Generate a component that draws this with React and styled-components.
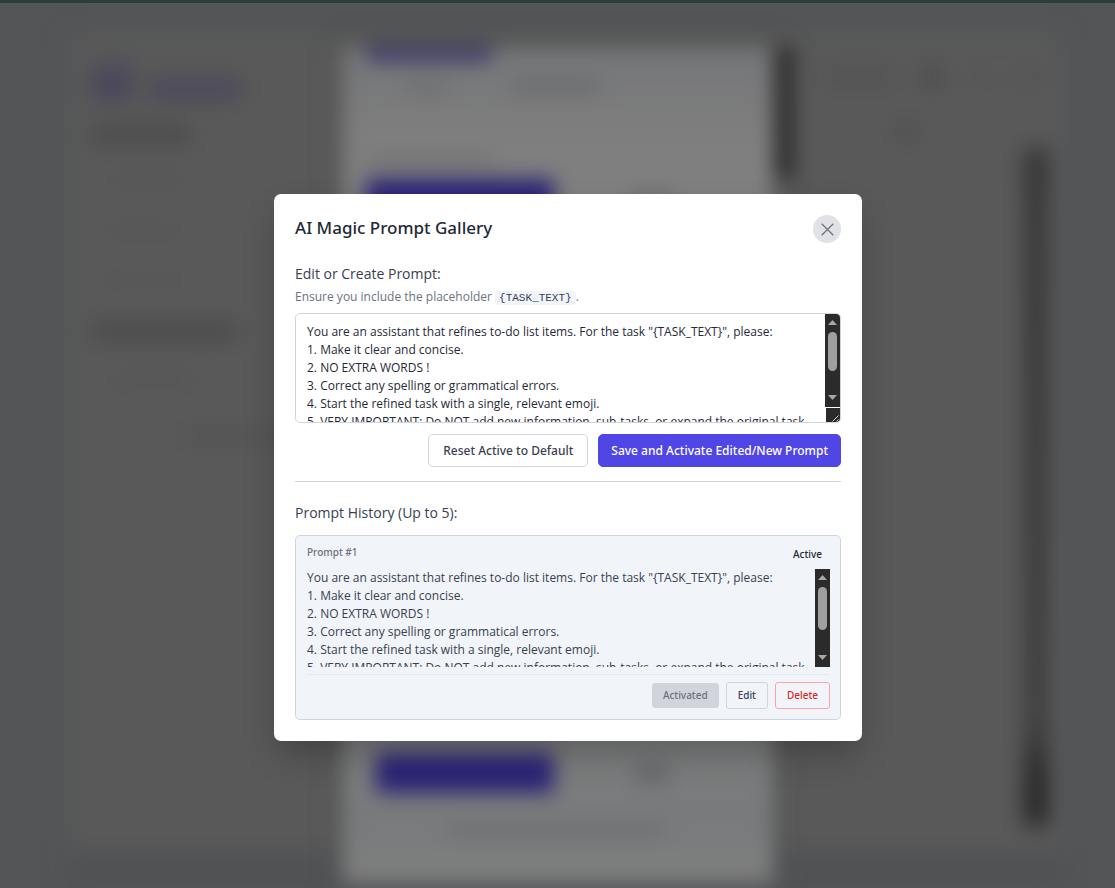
import React from 'react';
import styled, { createGlobalStyle } from 'styled-components';

const PROMPT = `You are an assistant that refines to-do list items. For the task "{TASK_TEXT}", please:
1. Make it clear and concise.
2. NO EXTRA WORDS !
3. Correct any spelling or grammatical errors.
4. Start the refined task with a single, relevant emoji.
5. VERY IMPORTANT: Do NOT add new information, sub-tasks, or expand the original task.`;

const uiFont = '"Noto Sans", "Open Sans", sans-serif';
const textFont = '"Open Sans", "Noto Sans", sans-serif';

const GlobalStyle = createGlobalStyle`
  *, *::before, *::after { box-sizing: border-box; }
  body { margin: 0; background: #535557; color: #374151; font-family: ${uiFont}; }
  h2, h3, p, pre { margin: 0; font-weight: 500; }
  button, textarea { font: inherit; margin: 0; }
`;

const Screen = styled.div`
  position: relative;
  min-height: 100vh;
  overflow: hidden;
  border-top: 3px solid #27403a;
`;

/* ---- dimmed, blurred page behind the dialog ---- */

const Backdrop = styled.div`
  position: absolute;
  inset: 0;
  overflow: hidden;
  background: #535557;
`;

const BlurredPage = styled.div`
  display: flex;
  flex-direction: column;
  height: 100%;
  padding: 30px 52px 0 68px;
  filter: blur(11px);
`;

const AppCard = styled.div`
  flex: 1;
  display: flex;
  justify-content: space-between;
  background: #595959;
  border-radius: 8px;
`;

const FooterShade = styled.div`
  height: 36px;
  background: #505254;
`;

const Sidebar = styled.div`
  display: flex;
  flex-direction: column;
  align-items: flex-start;
  width: 240px;
  padding: 32px 0 0 24px;
`;

const Smudge = styled.div`
  width: ${(p) => p.$w}px;
  height: ${(p) => p.$h}px;
  margin: ${(p) => p.$m || '0'};
  background: ${(p) => p.$c || '#505050'};
  border-radius: 4px;
`;

const LogoRow = styled.div`
  display: flex;
  align-items: center;
  gap: 16px;
`;

const Content = styled.div`
  display: flex;
  flex-direction: column;
  width: 240px;
  padding: 36px 16px 26px 0;
`;

const IconRow = styled.div`
  display: flex;
  justify-content: space-between;
  align-items: center;
  height: 16px;
  padding-right: 8px;
`;

const DarkTrack = styled.div`
  flex: 1;
  align-self: flex-end;
  width: 22px;
  background: linear-gradient(#303030, #363636 12%, #3c3c3c 85%, #222222 93%, #222222);
`;

const PanelLayer = styled.div`
  position: absolute;
  inset: 44px 0 4px;
  display: flex;
  justify-content: center;
  padding-left: 20px;
  filter: blur(10px);
`;

const Panel = styled.div`
  display: flex;
  flex-direction: column;
  width: 432px;
  padding: 0 24px 46px;
  background: linear-gradient(#757678, #7f7f7f 12%, #7f7f7f 75%, #787a7b 92%, #7f7f7f);
  box-shadow: 0 0 16px #4b4b4b;
`;

const PanelRow = styled.div`
  display: flex;
  align-items: center;
  gap: ${(p) => p.$gap}px;
  padding: ${(p) => p.$pad || '0'};
`;

const PanelScroll = styled.div`
  width: 20px;
  height: 132px;
  background: #2c2c2c;
`;

/* ---- dialog ---- */

const Overlay = styled.div`
  position: relative;
  display: flex;
  align-items: center;
  justify-content: center;
  min-height: calc(100vh - 3px);
  padding: 44px 0 0 21px;
`;

const Dialog = styled.section`
  width: 100%;
  max-width: 588px;
  padding: 21px;
  background: #ffffff;
  border-radius: 7px;
  box-shadow: 0 16px 32px -4px rgba(0, 0, 0, 0.25);
`;

const DialogHeader = styled.header`
  display: flex;
  align-items: center;
  justify-content: space-between;
  margin-bottom: 21px;
`;

const Title = styled.h2`
  color: #1f2937;
  font-size: 17px;
  line-height: 24px;
  padding-bottom: 2px;
`;

const CloseButton = styled.button`
  display: grid;
  place-items: center;
  width: 28px;
  height: 28px;
  padding: 0;
  border: 0;
  border-radius: 50%;
  background: #e1e2e6;
  color: #6b7280;
`;

const sectionTitle = `
  display: block;
  color: #374151;
  font-family: ${textFont};
  font-size: 14px;
  font-weight: 500;
  line-height: 20px;
`;

const EditorLabel = styled.label`${sectionTitle}`;
const SectionTitle = styled.h3`${sectionTitle}`;

const Hint = styled.p`
  margin: 4px 0 7px;
  color: #6b7280;
  font: 400 12px/18px ${textFont};
`;

const Code = styled.code`
  padding: 1px 4px;
  border-radius: 4px;
  background: #f1f5f9;
  color: #374151;
  font: 11px/13px "Liberation Mono", monospace;
`;

const Editor = styled.div`
  display: flex;
  height: 110px;
  border: 1px solid #d1d5db;
  border-radius: 5px;
  overflow: hidden;
`;

const EditorText = styled.textarea`
  flex: 1;
  min-width: 0;
  padding: 9px 11px 0;
  border: 0;
  outline: 0;
  resize: none;
  overflow: hidden;
  background: transparent;
  color: #1f2937;
  font: 400 12px/18px ${textFont};
`;

const ScrollColumn = styled.div`
  display: flex;
  flex-direction: column;
  gap: 1px;
  width: 15px;
`;

const Track = styled.div`
  flex: 1;
  display: flex;
  flex-direction: column;
  align-items: center;
  padding: 6px 0 7px;
  background: #2b2b2b;
`;

const Thumb = styled.div`
  width: 9px;
  height: ${(p) => p.$h}px;
  margin: 7px 0 auto;
  border-radius: 5px;
  background: #9f9f9f;
`;

const ActionRow = styled.div`
  display: flex;
  justify-content: flex-end;
  gap: 10px;
  margin-top: 11px;
`;

const Button = styled.button`
  height: 33px;
  padding: 0 ${(p) => (p.$primary ? 12 : 14)}px;
  border: 1px solid ${(p) => (p.$primary ? '#4f46e5' : '#d1d5db')};
  border-radius: 5px;
  background: ${(p) => (p.$primary ? '#4f46e5' : '#ffffff')};
  color: ${(p) => (p.$primary ? '#ffffff' : '#374151')};
  font-size: 12px;
  font-weight: 500;
  white-space: nowrap;
`;

const tones = {
  plain: ['#d1d5db', 'transparent', '#374151'],
  danger: ['#fca5a5', 'transparent', '#dc2626'],
  muted: ['#d1d5db', '#d1d5db', '#6b7280'],
};

const SmallButton = styled.button`
  height: ${(p) => (p.$tone === 'muted' ? 25 : 27)}px;
  padding: 0 ${(p) => (p.$tone === 'muted' ? 10 : 11)}px 2px;
  border: 1px solid ${(p) => tones[p.$tone][0]};
  border-radius: 3px;
  background: ${(p) => tones[p.$tone][1]};
  color: ${(p) => tones[p.$tone][2]};
  font-size: 10px;
  font-weight: 500;
`;

const Rule = styled.hr`
  width: 100%;
  height: 1px;
  margin: 14px 0 21px;
  border: 0;
  background: #d1d5db;
`;

const HistoryCard = styled.article`
  margin-top: 12px;
  padding: 7px 10px 10px 11px;
  border: 1px solid #cbd5e1;
  border-radius: 5px;
  background: #f1f5f9;
`;

const CardHeader = styled.div`
  display: flex;
  align-items: flex-start;
  justify-content: space-between;
  height: 26px;
  color: #6b7280;
  font-size: 10px;
  font-weight: 500;
  line-height: 18px;
`;

const ActiveBadge = styled.span`
  padding: 2px 8px 0;
  color: #1f2937;
`;

const HistoryBody = styled.div`
  display: flex;
  height: 98px;
  overflow: hidden;
`;

const HistoryText = styled.pre`
  flex: 1;
  min-width: 0;
  height: 98px;
  overflow: hidden;
  color: #374151;
  font: 400 12px/18px ${textFont};
  white-space: pre-wrap;
`;

const CardFooter = styled.div`
  display: flex;
  align-items: center;
  justify-content: flex-end;
  gap: 7px;
  margin-top: 7px;
  padding-top: 7px;
  border-top: 1px solid #e2e8f0;
`;

function Arrow({ down }) {
  return (
    <svg width="9" height="5" viewBox="0 0 9 5" aria-hidden="true">
      <path d={down ? 'M0 0h9L4.500 5z' : 'M0 5h9L4.500 0z'} fill="#a8a8a8" />
    </svg>
  );
}

function Scrollbar({ thumb, grip }) {
  return (
    <ScrollColumn aria-hidden="true">
      <Track>
        <Arrow />
        <Thumb $h={thumb} />
        <Arrow down />
      </Track>
      {grip && (
        <svg width="15" height="14" viewBox="0 0 15 14">
          <rect x="1" width="14" height="14" fill="#2b2b2b" />
          <path d="M7.500 13.500l6-6M11.500 13.500l2-2" stroke="#d4d4d4" strokeWidth="1" />
        </svg>
      )}
    </ScrollColumn>
  );
}

function PageBehind() {
  return (
    <Backdrop aria-hidden="true">
      <BlurredPage>
        <AppCard>
          <Sidebar>
            <LogoRow>
              <Smudge $w={40} $h={36} $c="#49475a" />
              <Smudge $w={92} $h={20} $c="#49475a" $m="12px 0 0" />
            </LogoRow>
            <Smudge $w={98} $h={16} $c="#484848" $m="26px 0 0" />
            <Smudge $w={86} $h={6} $c="#555555" $m="34px 0 0 12px" />
            <Smudge $w={76} $h={6} $c="#545454" $m="44px 0 0 12px" />
            <Smudge $w={76} $h={6} $c="#545454" $m="44px 0 0 12px" />
            <Smudge $w={146} $h={16} $c="#484848" $m="40px 0 0" />
            <Smudge $w={80} $h={8} $c="#535353" $m="38px 0 0 22px" />
            <Smudge $w={130} $h={10} $c="#515151" $m="46px 0 0 88px" />
          </Sidebar>
          <Content>
            <IconRow>
              <Smudge $w={72} $h={12} $c="#515151" />
              <Smudge $w={20} $h={18} $c="#4a4a4a" />
              <Smudge $w={18} $h={12} $c="#525252" />
              <Smudge $w={24} $h={12} $c="#515151" />
            </IconRow>
            <Smudge $w={26} $h={16} $c="#505050" $m="38px 0 10px 70px" />
            <DarkTrack />
          </Content>
        </AppCard>
        <FooterShade />
      </BlurredPage>
      <PanelLayer>
        <Panel>
          <Smudge $w={126} $h={16} $c="#413d6d" />
          <PanelRow $gap={64} $pad="18px 0 0 40px">
            <Smudge $w={42} $h={14} $c="#6e6f71" />
            <Smudge $w={86} $h={14} $c="#6a6b6d" />
          </PanelRow>
          <Smudge $w={128} $h={8} $c="#6c6c6c" $m="62px 0 0" />
          <PanelRow $gap={76} $pad="16px 0 0">
            <Smudge $w={188} $h={42} $c="#2b2475" />
            <Smudge $w={44} $h={14} $c="#686a6b" />
          </PanelRow>
          <PanelRow $gap={80} $pad="532px 0 0 10px">
            <Smudge $w={178} $h={40} $c="#2b2475" />
            <Smudge $w={36} $h={20} $c="#666869" />
          </PanelRow>
          <Smudge $w={216} $h={14} $c="#6d6e70" $m="32px 0 0 82px" />
        </Panel>
        <PanelScroll />
      </PanelLayer>
    </Backdrop>
  );
}

export default function App() {
  return (
    <Screen>
      <GlobalStyle />
      <PageBehind />
      <Overlay>
        <Dialog role="dialog" aria-modal="true" aria-labelledby="gallery-title">
          <DialogHeader>
            <Title id="gallery-title">AI Magic Prompt Gallery</Title>
            <CloseButton type="button" aria-label="Close">
              <svg width="13" height="13" viewBox="0 0 13 13" fill="none" stroke="currentColor" strokeWidth="1.300">
                <path d="M.7.7l11.600 11.600M12.300.7L.7 12.300" />
              </svg>
            </CloseButton>
          </DialogHeader>

          <EditorLabel htmlFor="prompt-editor">Edit or Create Prompt:</EditorLabel>
          <Hint>
            Ensure you include the placeholder <Code>{'{TASK_TEXT}'}</Code>.
          </Hint>
          <Editor>
            <EditorText id="prompt-editor" defaultValue={PROMPT} spellCheck={false} />
            <Scrollbar thumb={39} grip />
          </Editor>
          <ActionRow>
            <Button type="button">Reset Active to Default</Button>
            <Button type="button" $primary>
              Save and Activate Edited/New Prompt
            </Button>
          </ActionRow>

          <Rule />

          <SectionTitle>Prompt History (Up to 5):</SectionTitle>
          <HistoryCard>
            <CardHeader>
              <span>Prompt #1</span>
              <ActiveBadge>Active</ActiveBadge>
            </CardHeader>
            <HistoryBody>
              <HistoryText>{PROMPT}</HistoryText>
              <Scrollbar thumb={43} />
            </HistoryBody>
            <CardFooter>
              <SmallButton type="button" $tone="muted" disabled>
                Activated
              </SmallButton>
              <SmallButton type="button" $tone="plain">
                Edit
              </SmallButton>
              <SmallButton type="button" $tone="danger">
                Delete
              </SmallButton>
            </CardFooter>
          </HistoryCard>
        </Dialog>
      </Overlay>
    </Screen>
  );
}
